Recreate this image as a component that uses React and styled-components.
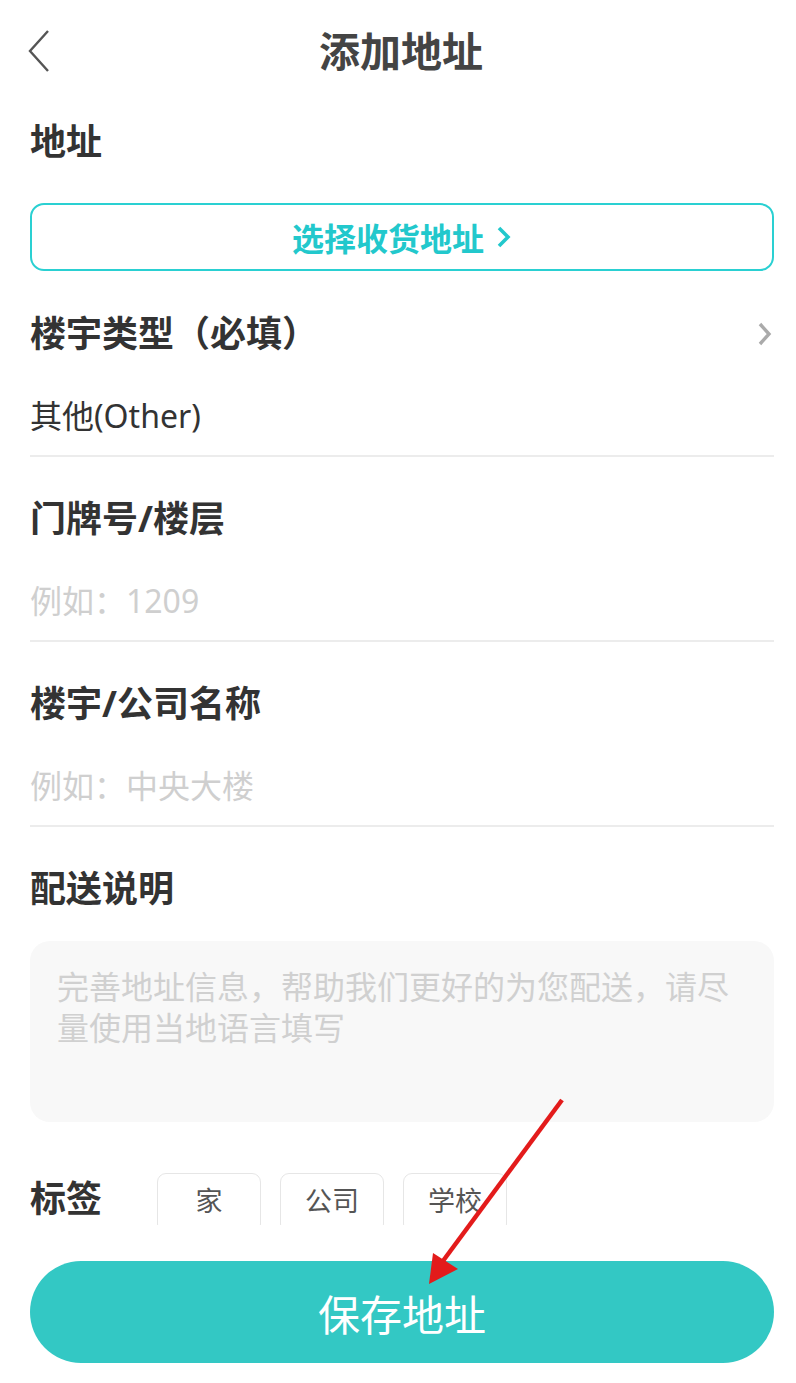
import React from 'react';
import styled, {createGlobalStyle} from "styled-components";

const GlobalStyle = createGlobalStyle`
  html, body {
    margin: 0;
    padding: 0;
    background: #fff;
  }
  body {
    font-family: "Noto Sans", "Noto Sans CJK SC", sans-serif;
    color: #333;
  }
`

const Page = styled.div`
  position: relative;
  width: 796px;
  min-height: 1383px;
  background: #fff;
  overflow: hidden;
`

const Header = styled.header`
  height: 100px;
  display: flex;
  align-items: center;
  justify-content: center;
  position: relative;
  .back{
    position: absolute;
    left: 26px;
    top: 29px;
  }
  h1{
    margin: 0;
    font-size: 41px;
    font-weight: 700;
    color: #444;
    line-height: 1;
    margin-top: 2px;
    margin-left: 6px;
  }
`

const Content = styled.div`
  padding: 17px 22px 0 30px;
`

const Label = styled.div`
  font-size: 36px;
  font-weight: 700;
  line-height: 50px;
  color: #333;
  display: flex;
  justify-content: space-between;
  align-items: center;
`

const PickButton = styled.button`
  margin-top: 36px;
  width: 100%;
  height: 68px;
  border: 2px solid #2ad0d2;
  border-radius: 14px;
  background: #fff;
  color: #22c8cc;
  font-family: "Noto Sans", "Noto Sans CJK SC", sans-serif;
  font-size: 32px;
  font-weight: 700;
  display: flex;
  align-items: center;
  justify-content: center;
  gap: 12px;
  padding: 0;
`

const Section = styled.div`
  padding-top: ${p => p.top || 37}px;
  padding-bottom: ${p => p.bottom === undefined ? 17 : p.bottom}px;
  border-bottom: ${p => p.noLine ? 'none' : '2px solid #ececec'};
`

const Value = styled.div`
  margin-top: 35px;
  font-size: 32px;
  line-height: 44px;
  color: ${p => p.placeholder ? '#cfcfcf' : '#333'};
`

const Note = styled.div`
  margin-top: 27px;
  height: 181px;
  box-sizing: border-box;
  background: #f8f8f8;
  border-radius: 20px;
  padding: 25px 40px 0 27px;
  font-size: 32px;
  line-height: 41px;
  color: #d0d0d0;
`

const TagRow = styled.div`
  margin-top: 51px;
  height: 52px;
  display: flex;
  align-items: flex-start;
  overflow: hidden;
  .tagLabel{
    width: 127px;
    font-size: 36px;
    font-weight: 700;
    line-height: 52px;
    color: #333;
  }
`

const Tag = styled.div`
  width: 104px;
  height: 60px;
  box-sizing: border-box;
  border: 1px solid #e6e6e6;
  border-radius: 9px;
  margin-right: 19px;
  font-size: 27px;
  color: #555;
  text-align: center;
  line-height: 54px;
`

const SaveButton = styled.button`
  margin-top: 36px;
  width: 100%;
  height: 102px;
  border: none;
  border-radius: 51px;
  background: #33c8c4;
  color: #fff;
  font-family: "Noto Sans", "Noto Sans CJK SC", sans-serif;
  font-size: 42px;
  font-weight: 400;
  padding: 0;
`

const Overlay = styled.svg`
  position: absolute;
  left: 0;
  top: 0;
  pointer-events: none;
`

const App = () => {
    return <Page>
        <GlobalStyle/>
        <Header>
            <svg className={'back'} width="26" height="44" viewBox="0 0 26 44">
                <path d="M22 2 L4 22 L22 42" fill="none" stroke="#555" strokeWidth="2.4"/>
            </svg>
            <h1>添加地址</h1>
        </Header>
        <Content>
            <Label>地址</Label>
            <PickButton>
                选择收货地址
                <svg width="16" height="24" viewBox="0 0 16 24">
                    <path d="M3 3 L12 12 L3 21" fill="none" stroke="#22c8cc" strokeWidth="3.6"/>
                </svg>
            </PickButton>

            <Section top={38} bottom={17}>
                <Label>
                    楼宇类型（必填）
                    <svg width="18" height="26" viewBox="0 0 18 26">
                        <path d="M4 3 L13 13 L4 23" fill="none" stroke="#aaa" strokeWidth="3.4"/>
                    </svg>
                </Label>
                <Value>其他(Other)</Value>
            </Section>

            <Section>
                <Label>门牌号/楼层</Label>
                <Value placeholder={1}>例如：1209</Value>
            </Section>

            <Section>
                <Label>楼宇/公司名称</Label>
                <Value placeholder={1}>例如：中央大楼</Value>
            </Section>

            <Section top={37} bottom={0} noLine>
                <Label>配送说明</Label>
                <Note>完善地址信息，帮助我们更好的为您配送，请尽量使用当地语言填写</Note>
            </Section>

            <TagRow>
                <div className={'tagLabel'}>标签</div>
                <Tag>家</Tag>
                <Tag>公司</Tag>
                <Tag>学校</Tag>
            </TagRow>

            <SaveButton>保存地址</SaveButton>
        </Content>

        <Overlay width="796" height="1383" viewBox="0 0 796 1383">
            <line x1="562" y1="1100" x2="440" y2="1265" stroke="#e31b1b" strokeWidth="4.5"/>
            <polygon points="429,1284 433,1253 458,1269" fill="#e31b1b"/>
        </Overlay>
    </Page>
}

export default App;
